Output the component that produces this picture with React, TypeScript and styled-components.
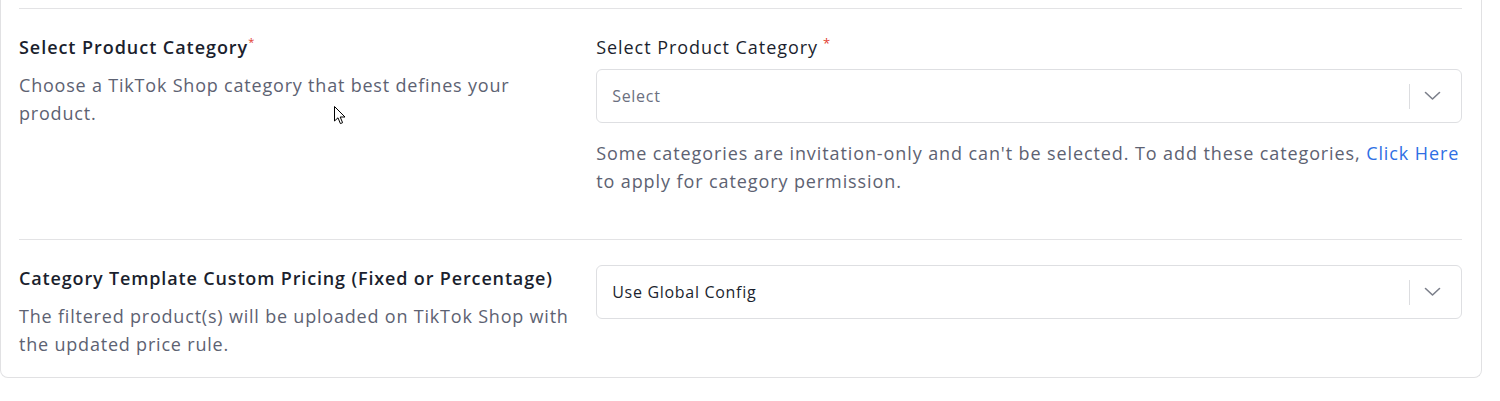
import styled, { createGlobalStyle } from 'styled-components';

const GlobalStyle = createGlobalStyle`
  body {
    margin: 0;
    background: #ffffff;
    font-family: 'Open Sans', 'Noto Sans', sans-serif;
  }
`;

const Card = styled.div`
  position: relative;
  box-sizing: border-box;
  width: 1482px;
  padding: 8px 19px 0 18px;
  border: 1px solid #e1e1e3;
  border-top: none;
  border-radius: 0 0 8px 8px;
  background: #ffffff;
`;

const Divider = styled.div`
  height: 1px;
  background: #e3e3e5;
`;

const Row = styled.div<{ $bottom: number }>`
  display: grid;
  grid-template-columns: 40% 60%;
  padding: 24px 0 ${({ $bottom }) => $bottom}px;
`;

const InfoColumn = styled.div`
  min-width: 0;
`;

const Title = styled.div<{ $spacing?: number }>`
  font-size: 18px;
  font-weight: 600;
  line-height: 28px;
  letter-spacing: ${({ $spacing }) => $spacing ?? 0.85}px;
  color: #1b1f2e;
  white-space: nowrap;
`;

const Required = styled.span`
  color: #e2402f;
  font-size: 11px;
  font-weight: 400;
  vertical-align: top;
  line-height: 18px;
  letter-spacing: 0;
`;

const Description = styled.p<{ $maxWidth?: number }>`
  margin: 10px 0 0;
  max-width: ${({ $maxWidth }) => ($maxWidth ? `${$maxWidth}px` : 'none')};
  font-size: 18px;
  line-height: 28px;
  letter-spacing: 0.8px;
  color: #5d6272;
`;

const FieldColumn = styled.div<{ $offset?: number }>`
  display: flex;
  flex-direction: column;
  padding-top: ${({ $offset }) => $offset ?? 0}px;
`;

const FieldLabel = styled.label`
  display: block;
  font-size: 18px;
  line-height: 28px;
  letter-spacing: 0.95px;
  color: #1b1f2e;
  margin-bottom: 8px;

  & span {
    color: #e2402f;
    font-size: 13px;
    line-height: 20px;
    vertical-align: top;
    margin-left: 5px;
  }
`;

const SelectBox = styled.div`
  box-sizing: border-box;
  display: flex;
  align-items: center;
  height: 54px;
  border: 1px solid #dedfe2;
  border-radius: 6px;
  background: #ffffff;
`;

const SelectValue = styled.div<{ $placeholder?: boolean }>`
  flex: 1;
  padding-left: 15px;
  font-size: 16px;
  letter-spacing: 0.7px;
  color: ${({ $placeholder }) => ($placeholder ? '#6b7080' : '#1b1f2e')};
`;

const Separator = styled.span`
  width: 1px;
  height: 25px;
  background: #dcdde0;
`;

const Indicator = styled.span`
  display: flex;
  align-items: center;
  box-sizing: border-box;
  width: 51px;
  padding-left: 14px;
  color: #7b7f8a;
`;

const Helper = styled.p`
  margin: 16px 0 0;
  font-size: 18px;
  line-height: 28px;
  letter-spacing: 0.9px;
  color: #5d6272;

  & a {
    color: #2f6fe4;
    text-decoration: none;
  }
`;

const Pointer = styled.svg`
  position: absolute;
  left: 333px;
  top: 106px;
`;

const Chevron = () => (
  <svg width="17" height="10" viewBox="0 0 17 10" fill="none">
    <path d="M1.5 1.5 L8.5 8 L15.5 1.5" stroke="currentColor" strokeWidth="1.6" strokeLinecap="round" strokeLinejoin="round" />
  </svg>
);

type SelectProps = { value?: string; placeholder?: string };

const Select = ({ value, placeholder }: SelectProps) => (
  <SelectBox>
    <SelectValue $placeholder={!value}>{value ?? placeholder}</SelectValue>
    <Separator />
    <Indicator>
      <Chevron />
    </Indicator>
  </SelectBox>
);

export default function App() {
  return (
    <>
      <GlobalStyle />
      <Card>
        <Divider />
        <Row $bottom={44}>
          <InfoColumn>
            <Title $spacing={0.95}>
              Select Product Category<Required>*</Required>
            </Title>
            <Description $maxWidth={535}>
              Choose a TikTok Shop category that best defines your product.
            </Description>
          </InfoColumn>
          <FieldColumn>
            <FieldLabel>
              Select Product Category<span>*</span>
            </FieldLabel>
            <Select placeholder="Select" />
            <Helper>
              Some categories are invitation-only and can't be selected. To add these categories,{' '}
              <a href="#">Click Here</a> to apply for category permission.
            </Helper>
          </FieldColumn>
        </Row>
        <Divider />
        <Row $bottom={19}>
          <InfoColumn>
            <Title>Category Template Custom Pricing (Fixed or Percentage)</Title>
            <Description $maxWidth={572}>
              The filtered product(s) will be uploaded on TikTok Shop with the updated price rule.
            </Description>
          </InfoColumn>
          <FieldColumn $offset={1}>
            <Select value="Use Global Config" />
          </FieldColumn>
        </Row>
        <Pointer width="12" height="19" viewBox="0 0 12 19">
          <path d="M0.5 0.5 L0.5 15 L4 11.8 L6.4 17.6 L8.6 16.7 L6.2 11 L11 11 Z" fill="#ffffff" stroke="#000000" strokeWidth="1" strokeLinejoin="round" />
        </Pointer>
      </Card>
    </>
  );
}
